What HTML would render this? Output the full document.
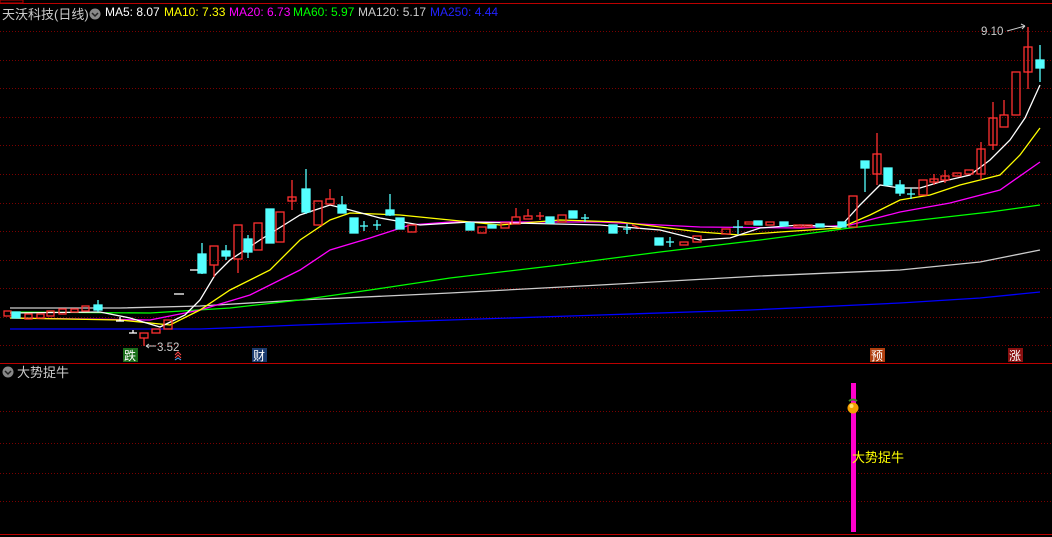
<!DOCTYPE html>
<html><head><meta charset="utf-8"><style>
body{margin:0;background:#000;width:1052px;height:537px;overflow:hidden;font-family:"Liberation Sans","Noto Sans CJK SC",sans-serif}
svg{position:absolute;left:0;top:0}
.hd{position:absolute;top:5px;font-size:12px;white-space:nowrap}
</style></head><body>
<svg width="1052" height="537" viewBox="0 0 1052 537">
<rect x="0" y="0" width="1052" height="537" fill="#000"/>
<line x1="0" y1="3.5" x2="1052" y2="3.5" stroke="#b00" stroke-width="1"/>
<rect x="0" y="0" width="23" height="3" fill="none" stroke="#b00"/>
<g stroke="#7a0000" stroke-dasharray="1,2" stroke-width="1">
<line x1="0" y1="31.5" x2="1052" y2="31.5"/><line x1="0" y1="60.5" x2="1052" y2="60.5"/>
<line x1="0" y1="88.5" x2="1052" y2="88.5"/><line x1="0" y1="117.5" x2="1052" y2="117.5"/>
<line x1="0" y1="145.5" x2="1052" y2="145.5"/><line x1="0" y1="174.5" x2="1052" y2="174.5"/>
<line x1="0" y1="203.5" x2="1052" y2="203.5"/><line x1="0" y1="231.5" x2="1052" y2="231.5"/>
<line x1="0" y1="260.5" x2="1052" y2="260.5"/><line x1="0" y1="288.5" x2="1052" y2="288.5"/>
<line x1="0" y1="317.5" x2="1052" y2="317.5"/><line x1="0" y1="345.5" x2="1052" y2="345.5"/>
<line x1="0" y1="411.5" x2="1052" y2="411.5"/><line x1="0" y1="443.5" x2="1052" y2="443.5"/>
<line x1="0" y1="473.5" x2="1052" y2="473.5"/><line x1="0" y1="501.5" x2="1052" y2="501.5"/>
</g>
<line x1="0" y1="363.5" x2="1052" y2="363.5" stroke="#b00"/>
<line x1="0" y1="534.5" x2="1052" y2="534.5" stroke="#b00"/>
<g fill="none" stroke-width="1.3">
<polyline stroke="#00f" points="10,329 200,329 300,325 450,320 600,315 750,310 900,303 980,298 1040,292"/>
<polyline stroke="#ccc" points="10,308 120,308 200,306 300,300 450,293 600,285 760,276 900,270 980,262 1040,250"/>
<polyline stroke="#0f0" points="10,312 150,313 230,308 300,300 370,290 450,278 560,265 660,252 760,240 850,228 920,220 990,212 1040,205"/>
<polyline stroke="#f0f" points="10,318 150,320 200,310 250,295 300,270 330,250 370,238 410,225 450,222 600,222 700,227 800,228 850,225 900,212 950,203 1000,190 1040,162"/>
<polyline stroke="#ff0" points="10,318 120,320 170,325 200,310 230,290 270,270 300,240 330,220 350,213 400,215 450,220 500,225 560,220 620,222 700,232 740,235 780,232 840,228 870,215 900,200 930,195 960,185 1000,175 1020,155 1040,128"/>
<polyline stroke="#fff" points="10,313 100,312 130,318 160,327 185,315 200,300 215,275 230,260 260,240 300,215 330,205 350,210 380,218 420,225 470,222 600,225 660,230 700,240 730,238 760,228 800,225 840,227 860,205 880,185 900,188 920,188 940,182 970,175 990,160 1010,140 1025,118 1040,85"/>
</g>
<g stroke="#ff3030" fill="none" stroke-width="1.3">
<rect x="4" y="311" width="7" height="5"/><rect x="25" y="314" width="7" height="5"/><rect x="37" y="314" width="7" height="4"/>
<rect x="47" y="311" width="7" height="5"/><rect x="59" y="309" width="7" height="5"/><rect x="71" y="309" width="7" height="3"/><rect x="82" y="306" width="7" height="5"/>
<line x1="144" y1="338" x2="144" y2="346"/><rect x="140" y="333" width="8" height="5"/><rect x="152" y="329" width="8" height="4"/><rect x="164" y="320" width="8" height="9"/>
<line x1="214" y1="265" x2="214" y2="277"/><rect x="210" y="246" width="8" height="19"/>
<line x1="238" y1="259" x2="238" y2="273"/><rect x="234" y="225" width="8" height="34"/>
<rect x="254" y="223" width="8" height="27"/><rect x="276" y="212" width="8" height="30"/>
<line x1="292" y1="180" x2="292" y2="210"/><rect x="288" y="197" width="8" height="4"/>
<rect x="314" y="201" width="8" height="24"/><line x1="330" y1="189" x2="330" y2="199"/><rect x="326" y="199" width="8" height="5"/>
<rect x="408" y="225" width="8" height="7"/><rect x="478" y="227" width="8" height="6"/><rect x="501" y="223" width="8" height="5"/>
<line x1="516" y1="208" x2="516" y2="217"/><rect x="512" y="217" width="8" height="7"/>
<line x1="528" y1="209" x2="528" y2="216"/><rect x="524" y="216" width="8" height="3"/>
<line x1="540" y1="212" x2="540" y2="220"/><line x1="536" y1="216" x2="544" y2="216"/><rect x="558" y="215" width="8" height="7"/>
<line x1="632" y1="225" x2="640" y2="228"/><rect x="680" y="242" width="8" height="3"/><rect x="693" y="236" width="8" height="6"/><rect x="722" y="229" width="8" height="5"/>
<rect x="745" y="222" width="8" height="2"/><rect x="766" y="222" width="8" height="3"/><rect x="794" y="225" width="8" height="2"/><rect x="804" y="225" width="8" height="2"/>
<rect x="849" y="196" width="8" height="31"/>
<line x1="877" y1="133" x2="877" y2="185"/><rect x="873" y="154" width="8" height="20"/>
<rect x="919" y="180" width="8" height="15"/><line x1="934" y1="174" x2="934" y2="185"/><rect x="930" y="179" width="8" height="3"/>
<line x1="945" y1="170" x2="945" y2="183"/><rect x="941" y="176" width="8" height="4"/><rect x="953" y="173" width="8" height="3"/><rect x="965" y="170" width="8" height="4"/>
<line x1="981" y1="142" x2="981" y2="180"/><rect x="977" y="149" width="8" height="25"/>
<line x1="993" y1="102" x2="993" y2="150"/><rect x="989" y="118" width="8" height="27"/>
<line x1="1004" y1="100" x2="1004" y2="115"/><rect x="1000" y="115" width="8" height="12"/>
<rect x="1012" y="72" width="8" height="43"/><line x1="1028" y1="27" x2="1028" y2="89"/><rect x="1024" y="47" width="8" height="25"/>
</g>
<g fill="#5ff" stroke="#5ff" stroke-width="1.3">
<rect x="12" y="312" width="8" height="6"/><rect x="94" y="305" width="8" height="5"/><line x1="98" y1="300" x2="98" y2="312"/>
<line x1="202" y1="243" x2="202" y2="274"/><rect x="198" y="254" width="8" height="19"/>
<line x1="226" y1="245" x2="226" y2="260"/><rect x="222" y="251" width="8" height="5"/>
<line x1="248" y1="235" x2="248" y2="258"/><rect x="244" y="239" width="8" height="13"/>
<rect x="266" y="209" width="8" height="34"/>
<line x1="306" y1="169" x2="306" y2="214"/><rect x="302" y="189" width="8" height="23"/>
<line x1="342" y1="196" x2="342" y2="213"/><rect x="338" y="205" width="8" height="8"/>
<rect x="350" y="218" width="8" height="15"/><line x1="364" y1="221" x2="364" y2="231"/><line x1="360" y1="226" x2="368" y2="226"/>
<line x1="377" y1="220" x2="377" y2="230"/><line x1="373" y1="225" x2="381" y2="225"/>
<line x1="390" y1="194" x2="390" y2="216"/><rect x="386" y="210" width="8" height="5"/><rect x="396" y="218" width="8" height="11"/>
<rect x="466" y="223" width="8" height="7"/><rect x="488" y="225" width="8" height="3"/><rect x="546" y="217" width="8" height="6"/>
<rect x="569" y="211" width="8" height="7"/><line x1="585" y1="214" x2="585" y2="222"/><line x1="581" y1="218" x2="589" y2="218"/>
<rect x="609" y="225" width="8" height="8"/><line x1="627" y1="224" x2="627" y2="234"/><line x1="623" y1="229" x2="631" y2="229"/>
<rect x="655" y="238" width="8" height="7"/><line x1="670" y1="237" x2="670" y2="247"/><line x1="666" y1="242" x2="674" y2="242"/>
<line x1="738" y1="220" x2="738" y2="234"/><line x1="733" y1="227" x2="743" y2="227"/>
<rect x="754" y="221" width="8" height="4"/><rect x="780" y="222" width="8" height="4"/><rect x="816" y="224" width="8" height="3"/><rect x="838" y="222" width="8" height="5"/>
<line x1="865" y1="161" x2="865" y2="192"/><rect x="861" y="161" width="8" height="7"/>
<rect x="884" y="168" width="8" height="17"/><line x1="900" y1="180" x2="900" y2="196"/><rect x="896" y="185" width="8" height="8"/>
<line x1="911" y1="188" x2="911" y2="199"/><line x1="907" y1="194" x2="915" y2="194"/>
<line x1="1040" y1="45" x2="1040" y2="82"/><rect x="1036" y="60" width="8" height="8"/>
</g>
<g stroke="#fff" stroke-width="1.3"><line x1="116" y1="321" x2="124" y2="321"/><line x1="120" y1="317" x2="120" y2="321"/>
<line x1="129" y1="333" x2="137" y2="333"/><line x1="133" y1="330" x2="133" y2="333"/><line x1="174" y1="294" x2="184" y2="294"/><line x1="190" y1="270" x2="198" y2="270"/></g>
<g fill="#ccc" font-size="11.5" font-family="Liberation Sans,sans-serif">
<text x="157" y="351">3.52</text><text x="981" y="35">9.10</text></g>
<g stroke="#ccc" fill="none"><path d="M146,346 L156,346 M146,346 l3,-2 M146,346 l3,2"/><path d="M1007,31 L1025,26 M1025,26 l-4,-2 M1025,26 l-3,3"/></g>
<rect x="123" y="348" width="15" height="14" fill="#1a6e1a"/><text x="124" y="360" font-size="12" fill="#fff" font-family="Noto Sans CJK SC,sans-serif">跌</text>
<path d="M175,355 l3,-3 l3,3 M175,358 l3,-3 l3,3" stroke="#f44" fill="none"/><path d="M175,360 l3,-2 l3,2" stroke="#4af" fill="none"/>
<rect x="252" y="348" width="15" height="14" fill="#1a3a6e"/><text x="253" y="360" font-size="12" fill="#fff" font-family="Noto Sans CJK SC,sans-serif">财</text>
<rect x="870" y="348" width="15" height="14" fill="#b04010"/><text x="871" y="360" font-size="12" fill="#fff" font-family="Noto Sans CJK SC,sans-serif">预</text>
<rect x="1008" y="348" width="15" height="14" fill="#8a1010"/><text x="1009" y="360" font-size="12" fill="#fff" font-family="Noto Sans CJK SC,sans-serif">涨</text>
<rect x="851" y="383" width="5" height="149" fill="#f0c"/>
<circle cx="853" cy="408" r="5.5" fill="#f5a000"/><circle cx="851.5" cy="406" r="2" fill="#ffe070"/>
<path d="M849,401 q4,-3 8,0" stroke="#3a8a2a" stroke-width="2" fill="none"/>
<text x="852" y="462" font-size="13" fill="#ff0" font-family="Noto Sans CJK SC,sans-serif">大势捉牛</text>
<circle cx="8" cy="372" r="5.5" fill="#888"/><path d="M5,371 l3,3 l3,-3" stroke="#222" stroke-width="1.5" fill="none"/>
<text x="17" y="377" font-size="13" fill="#ccc" font-family="Liberation Sans,Noto Sans CJK SC,sans-serif">大势捉牛</text>
<circle cx="95" cy="14" r="5.5" fill="#888"/><path d="M92,13 l3,3 l3,-3" stroke="#222" stroke-width="1.5" fill="none"/>
</svg>
<div class="hd" style="left:2px;color:#ccc;font-size:13px;top:4px">天沃科技(日线)</div>
<div class="hd" style="left:105px;color:#fff">MA5: 8.07</div>
<div class="hd" style="left:164px;color:#ff0">MA10: 7.33</div>
<div class="hd" style="left:229px;color:#f0f">MA20: 6.73</div>
<div class="hd" style="left:293px;color:#0f0">MA60: 5.97</div>
<div class="hd" style="left:358px;color:#ccc">MA120: 5.17</div>
<div class="hd" style="left:430px;color:#22f">MA250: 4.44</div>
</body></html>
